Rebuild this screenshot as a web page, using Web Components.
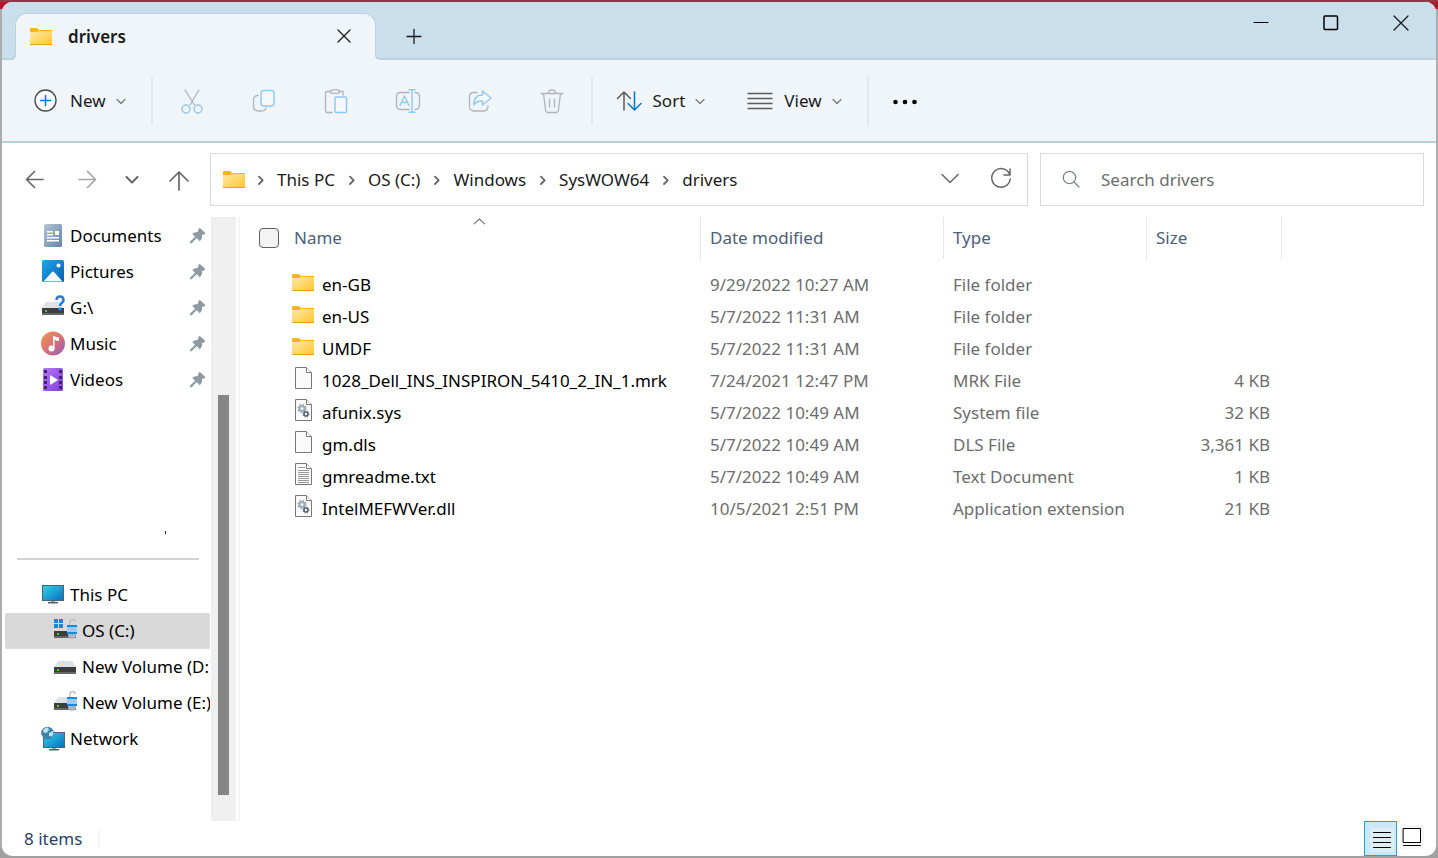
<!DOCTYPE html>
<html lang="en">
<head>
<meta charset="utf-8">
<meta name="viewport" content="width=device-width, initial-scale=1">
<title>drivers</title>
<style>
  html, body {
    margin: 0;
    height: 100%;
  }

  body {
    --line: #bad0dd;
    --bar: #eff5f9;
    --title: #c9dfeb;
    --text: #000;
    --muted: #6d6d6d;
    --heading: #4c607a;
    font: 17px/24px "Noto Sans", "Open Sans", sans-serif;
    color: var(--text);
    background: linear-gradient(#8b3b45 0 2px, #a81c2c 2px 9px, #acacac 9px 848px, #a0a0a0 848px);
    overflow: hidden;
  }
</style>
</head>
<body>
<explorer-window>
  <title-bar slot="title" label="drivers"></title-bar>
  <command-bar slot="commands"></command-bar>
  <address-bar slot="address" path="This PC/OS (C:)/Windows/SysWOW64/drivers"></address-bar>
  <nav-pane slot="nav">
    <nav-item icon="documents" pinned>Documents</nav-item>
    <nav-item icon="pictures" pinned>Pictures</nav-item>
    <nav-item icon="driveUnknown" pinned>G:\</nav-item>
    <nav-item icon="music" pinned>Music</nav-item>
    <nav-item icon="videos" pinned>Videos</nav-item>
    <nav-item slot="devices" icon="pc">This PC</nav-item>
    <nav-item slot="devices" icon="driveOs" nested selected>OS (C:)</nav-item>
    <nav-item slot="devices" icon="drive" nested>New Volume (D:)</nav-item>
    <nav-item slot="devices" icon="driveUnlocked" nested>New Volume (E:)</nav-item>
    <nav-item slot="devices" icon="network">Network</nav-item>
  </nav-pane>
  <file-list slot="files"></file-list>
  <status-bar slot="status">8 items</status-bar>
</explorer-window>

<script>
const driveBase = `
  <path d="M5 6h14l4 6H1z" fill="#dfe1e4"/>
  <path d="M1 12h22v7H1z" fill="#3d3d3d"/>
  <path d="M1 17h22v2H1z" fill="#666"/>
  <path d="M4 14h2v2H4z" fill="#2be02b"/>`;

const padlock = `
  <path d="M17 7V3q0-2.500 2.500-2.500T22 3" fill="none" stroke="#b9c3cb" stroke-width="1.500"/>
  <path d="M15 7h8v9q0 3-4 4-4-1-4-4z" fill="#a9b5bf"/>
  <path d="M14 6h10v2H14zM14 13h10v2H14z" fill="#1689dc"/>
  <path d="M14 8h10v5H14z" fill="#9ccbee"/>`;

const page = `
  <path d="M4.500.500h11l5 5v16h-16z" fill="#fafafa" stroke="#777"/>
  <path d="M15.500.500v5h5" fill="#fff" stroke="#777"/>`;

const gears = `
  <circle cx="11" cy="9.500" r="2.500" fill="none" stroke="#9aa7b5" stroke-width="2"/>
  <circle cx="11" cy="9.500" r="4" fill="none" stroke="#9aa7b5" stroke-width="1.500" stroke-dasharray="1.600 1.540"/>
  <circle cx="15" cy="15" r="2" fill="none" stroke="#56626e" stroke-width="1.600"/>
  <circle cx="15" cy="15" r="3" fill="none" stroke="#56626e" stroke-width="1" stroke-dasharray="1.200 1.150"/>`;

const monitor = `
  <path d="M10 17h4v3h-4z" fill="#99a3ab"/>
  <path d="M7 19h10v1.500H7z" fill="#55616a"/>
  <path d="M1 2h22v16H1z" fill="#456579"/>
  <path d="M2 3h20v14H2z" fill="url(#g)"/>`;

// Every icon is drawn on a 24 x 24 grid
const ICONS = {
  folder: `
    <linearGradient id="g" x2="1" y2="1"><stop stop-color="#ffe9a6"/><stop offset="1" stop-color="#ffc62f"/></linearGradient>
    <path d="M1 4q0-1 1-1h6l2 2h13v3H1z" fill="#f9b41a"/>
    <path d="M1 7h7l2-1h13v14H1z" fill="url(#g)"/>
    <path d="M1 19h22v1H1z" fill="#e9a417"/>`,
  close: `<path d="m6 5 12 12M18 5 6 17" class="s"/>`,
  closeWin: `<path d="m5 5 14 14M19 5 5 19" class="s"/>`,
  plus: `<path d="M12 4.500v14M5 11.500h14" class="s"/>`,
  minimize: `<path d="M5 11.500h14" class="s" stroke="#000" stroke-width="1"/>`,
  maximize: `<rect x="5" y="5" width="13.500" height="13.500" rx="1" class="s" stroke="#000" stroke-width="1.500"/>`,
  add: `<circle cx="11.500" cy="11.500" r="10.500" class="s" fill="#fafcfd" stroke="#484848" stroke-width="1.300"/><path d="M11.500 6.500v10M6.500 11.500h10" class="s" stroke="#0078d4" stroke-width="1.500"/>`,
  chevron: `<path d="m8 10.500 4 4 4-4" class="s" stroke="#777" stroke-width="1.200"/>`,
  cut: `<path d="m5 1 9.500 15M19 1l-5 8-4 7" class="s" stroke="#b2b5b8"/><circle cx="6" cy="20" r="4" class="s" stroke="#96c8ee" stroke-width="1.500"/><circle cx="18" cy="20" r="4" class="s" stroke="#96c8ee" stroke-width="1.500"/>`,
  copy: `<path d="M6 6.500Q1.500 6.500 1.500 11v6q0 5 5 5h3q4 0 4.500-3" class="s" stroke="#b2b5b8"/><rect x="9" y="1.500" width="13" height="15.500" rx="3" class="s" fill="#f3f9fd" stroke="#96c8ee" stroke-width="1.500"/>`,
  paste: `<path d="M7 2.500H3q-1.500 0-1.500 1.500v18q0 1.500 1.500 1.500h5M15 2.500h4V6" class="s" stroke="#b2b5b8"/><rect x="6.500" y=".800" width="9" height="3.500" rx="1.700" class="s" stroke="#b2b5b8"/><rect x="11" y="8" width="11.500" height="15.500" rx="1" class="s" fill="#f3f9fd" stroke="#96c8ee" stroke-width="1.500"/>`,
  rename: `<path d="M13 3.500H4Q.500 3.500.500 8v8q0 4.500 3.500 4.500h9M19 3.500q4.500 0 4.500 4.500v8q0 4.500-4.500 4.500" class="s" stroke="#b2b5b8"/><path d="M4 16.500 8.500 7l4.500 9.500M5.500 13.500h6M16 .700q-1 0-3 0h6M16 .700v22.600M13 23.300h6" class="s" stroke="#96c8ee" stroke-width="1.500"/>`,
  share: `<path d="M9 3.500H5.500Q1.500 3.500 1.500 8v9.500Q1.500 22 6 22h9.500q4.500 0 4.500-5" class="s" stroke="#b2b5b8"/><path d="M14.500 2 23 9l-8.500 7v-4q-6-.500-8.500 4Q5.500 6 14.500 6z" class="s" fill="#f3f9fd" stroke="#96c8ee" stroke-width="1.500"/>`,
  trash: `<path d="M1 4.500h22M8.500 4Q8.500 1 12 1t3.500 3M3.500 4.500l2 16.500q.300 2.500 2.500 2.500h8q2.200 0 2.500-2.500l2-16.500M9.500 10v8M14.500 10v8" class="s" stroke="#b2b5b8"/>`,
  sort: `<path d="M7 21V3M.500 9.500 7 3l6.500 6.500" class="s" stroke="#5a5a5a" stroke-width="1.500"/><path d="M17.500 3v18M11 14.500l6.500 6.500 6.500-6.500" class="s" stroke="#0078d4" stroke-width="1.500"/>`,
  view: `<path d="M0 4.500h24M0 9.500h24M0 14.500h24M0 19.500h24" class="s" stroke="#5a5a5a" stroke-width="1.300"/>`,
  more: `<circle cx="2.500" cy="13" r="2.300"/><circle cx="12" cy="13" r="2.300"/><circle cx="21.500" cy="13" r="2.300"/>`,
  back: `<path d="M20 11.500H3.500M11.500 3.500l-8 8 8 8" class="s" stroke="#666" stroke-width="1.700"/>`,
  forward: `<path d="M3 11.500h16.500M11.500 3.500l8 8-8 8" class="s" stroke="#a6a6a6" stroke-width="1.700"/>`,
  down: `<path d="m6.500 9 5.500 5.500L17.500 9" class="s" stroke="#666" stroke-width="2"/>`,
  up: `<path d="M12 22V4M3 13l9-9 9 9" class="s" stroke="#666" stroke-width="1.700"/>`,
  crumb: `<path d="m9 7 5.500 5.500L9 18" class="s" stroke="#666" stroke-width="2.800"/>`,
  expand: `<path d="m4 6.500 8 8 8-8" class="s" stroke="#666" stroke-width="1.500"/>`,
  refresh: `<path d="M20.500 6A9.300 9.300 0 1 0 21.300 11M21 1v6h-6" class="s" stroke="#666" stroke-width="1.500"/>`,
  search: `<circle cx="10.500" cy="9.500" r="6.200" class="s" stroke="#7a8088"/><path d="m15 14 5 5" class="s" stroke="#7a8088"/>`,
  sortAsc: `<path d="M5.500 14.500 12.500 8l7 6.500" class="s" stroke="#777" stroke-width="1.500"/>`,
  pin: `<path d="M13.500 0q2 0 8.500 6.500 2 2-1.500 3.500l-2.500.500q1 6-3.500 9.500L10 15l-7.500 8H0v-2.500L7.500 13 3.500 8.500Q6 6 11.500 6z" fill="#8f9ba4"/>`,
  documents: `
    <linearGradient id="g" x2="1" y2="1"><stop stop-color="#b4c6da"/><stop offset="1" stop-color="#6383a6"/></linearGradient>
    <rect x="3" width="18" height="23" rx="1.500" fill="url(#g)"/>
    <path d="M6 7h6v1.500H6zM6 10h6v1.500H6zM6 13h12v1.500H6zM6 16h12v1.500H6zM14 7h4v4h-4z" fill="#fff"/>`,
  pictures: `
    <linearGradient id="g" x2="1" y2="1"><stop stop-color="#1fa7ec"/><stop offset="1" stop-color="#0560b4"/></linearGradient>
    <rect x="1" width="22" height="22" rx="1.500" fill="url(#g)"/>
    <circle cx="17.500" cy="5.500" r="2" fill="#fff"/>
    <path d="m2.500 21.500 8.500-9.500q1-1 2 0l8.500 9.500z" fill="#f4f8fc"/>`,
  driveUnknown: driveBase + `<path d="M15.500 4Q15.500.500 19 .500t3.500 3.500c0 3-3.500 3-3.500 6" fill="none" stroke="#0f83da" stroke-width="2.500"/><circle cx="19" cy="13" r="1.700" fill="#1a91e8"/>`,
  music: `
    <linearGradient id="g" x2="1" y2="1"><stop offset=".100" stop-color="#f48e54"/><stop offset=".600" stop-color="#cf6b80"/><stop offset="1" stop-color="#8c60c8"/></linearGradient>
    <circle cx="12" cy="11.500" r="12" fill="url(#g)"/>
    <path d="M12 4h1q2.500 1.500 5 1.500V9q-2.500 0-4.500-1.500v9H12z" fill="#fff"/>
    <circle cx="10.500" cy="16.500" r="3" fill="#fff"/>`,
  videos: `
    <linearGradient id="g" x2="1" y2="1"><stop stop-color="#b377f4"/><stop offset="1" stop-color="#8240de"/></linearGradient>
    <rect x="2" width="20" height="23" rx="1.500" fill="url(#g)"/>
    <path d="M3 2h3v3H3zM3 8h3v3H3zM3 13h3v3H3zM3 18h3v3H3zM18 2h3v3h-3zM18 8h3v3h-3zM18 13h3v3h-3zM18 18h3v3h-3z" fill="#40236f"/>
    <path d="m9 7 8 5-8 5z" fill="#fff"/>`,
  pc: `<linearGradient id="g" x2="1" y2="1"><stop stop-color="#32d1e4"/><stop offset="1" stop-color="#0871c4"/></linearGradient>` + monitor,
  driveOs: driveBase.replace('M5 6h14l4 6H1z', 'M12 9h9l2 3H11z') + `<path d="M1 0h4v4H1zM6 0h4v4H6zM1 5h4v4H1zM6 5h4v4H6z" fill="#1688dc"/>` + padlock,
  drive: driveBase,
  driveUnlocked: driveBase + padlock,
  network: `
    <linearGradient id="g" x2="1" y2="1"><stop stop-color="#32d1e4"/><stop offset="1" stop-color="#0871c4"/></linearGradient>
    <g transform="translate(1 3)">${monitor}</g>
    <circle cx="6.500" cy="6" r="6.300" fill="#3d84ab"/>
    <path d="M2 3q2-3 5-2.500L8 3 6 5.500 3 6zM8 6l4-2q1 3-1 5.500L8 9z" fill="#bfe0ec"/>`,
  file: page,
  system: page + gears,
  text: page + `<path d="M7 4.500h7M7 7.500h11M7 9.500h11M7 11.500h11M7 13.500h11M7 15.500h11M7 17.500h11M7 19.500h11" stroke="#9a9a9a"/>`,
  details: `<path d="M3.500 4.500h17M3.500 9.500h17M3.500 14.500h17M3.500 19.500h17" class="s" stroke="#000" stroke-width="1"/>`,
  thumbs: `<path d="M3.500 3.500h17v14h-17zM3.500 20.500h17" class="s" fill="#fff" stroke="#000" stroke-width="1"/>`
};

class FxIcon extends HTMLElement {
  constructor() {
    super();
    this.attachShadow({ mode: 'open' });
  }

  connectedCallback() {
    this.shadowRoot.innerHTML = `
      <style>
        :host { display: inline-block; width: 24px; height: 24px; flex: none; }
        svg { display: block; width: 100%; height: 100%; overflow: visible; }
        .s { stroke-linecap: round; stroke-linejoin: round; }
        .s:not([fill]) { fill: none; }
        .s:not([stroke]) { stroke: #1a1a1a; }
        .s:not([stroke-width]) { stroke-width: 1.3px; }
      </style>
      <svg viewBox="0 0 24 24" aria-hidden="true">${ICONS[this.getAttribute('name')] || ''}</svg>
    `;
  }
}

class ExplorerWindow extends HTMLElement {
  constructor() {
    super();
    this.attachShadow({ mode: 'open' });
    this.shadowRoot.innerHTML = `
      <style>
        :host {
          display: block;
          box-sizing: border-box;
          height: 100vh;
          padding: 2px;
        }
        .frame {
          box-sizing: border-box;
          height: 100%;
          display: flex;
          flex-direction: column;
          background: #fff;
          border-radius: 10px;
          overflow: hidden;
        }
        .main {
          flex: 1;
          min-height: 0;
          display: grid;
          grid-template-columns: 236px minmax(0, 1fr);
        }
      </style>
      <div class="frame">
        <slot name="title"></slot>
        <slot name="commands"></slot>
        <slot name="address"></slot>
        <div class="main">
          <slot name="nav"></slot>
          <slot name="files"></slot>
        </div>
        <slot name="status"></slot>
      </div>
    `;
  }
}

class TitleBar extends HTMLElement {
  constructor() {
    super();
    this.attachShadow({ mode: 'open' });
  }

  connectedCallback() {
    this.shadowRoot.innerHTML = `
      <style>
        :host {
          display: flex;
          align-items: flex-end;
          height: 58px;
          padding-left: 13px;
          background: linear-gradient(var(--title) 56px, #bdd2e0 56px);
        }
        button {
          font: inherit;
          padding: 0;
          border: 0;
          background: none;
          display: grid;
          place-items: center;
        }
        .tab {
          box-sizing: border-box;
          position: relative;
          display: flex;
          align-items: center;
          width: 361px;
          height: 47px;
          padding: 0 18px 0 13px;
          background: var(--bar);
          border: 1px solid #bdd2e0;
          border-bottom: 0;
          border-radius: 12px 12px 0 0;
        }
        /* feet that flare out where the tab meets the bar */
        .tab::before, .tab::after {
          content: "";
          position: absolute;
          bottom: 0;
          width: 5px;
          height: 5px;
        }
        .tab::before {
          right: 100%;
          background: radial-gradient(circle at 0 0, var(--title) 3px, #bdd2e0 3px 5px, var(--bar) 5px);
        }
        .tab::after {
          left: 100%;
          background: radial-gradient(circle at 100% 0, var(--title) 3px, #bdd2e0 3px 5px, var(--bar) 5px);
        }
        .tab span {
          flex: 1;
          margin-left: 15px;
          font-weight: 600;
          color: #1a1a1a;
        }
        .tab button { width: 26px; height: 26px; }
        .new { width: 48px; height: 46px; margin-left: 14px; }
        .controls {
          display: flex;
          margin-left: auto;
          align-self: flex-start;
        }
        .controls button { width: 70px; height: 41px; }
      </style>
      <div class="tab">
        <fx-icon name="folder"></fx-icon>
        <span>${this.getAttribute('label')}</span>
        <button aria-label="Close tab"><fx-icon name="close"></fx-icon></button>
      </div>
      <button class="new" aria-label="New tab"><fx-icon name="plus"></fx-icon></button>
      <div class="controls">
        <button aria-label="Minimize"><fx-icon name="minimize"></fx-icon></button>
        <button aria-label="Maximize"><fx-icon name="maximize"></fx-icon></button>
        <button aria-label="Close"><fx-icon name="closeWin"></fx-icon></button>
      </div>
    `;
  }
}

class CommandBar extends HTMLElement {
  constructor() {
    super();
    this.attachShadow({ mode: 'open' });
    const actions = ['cut', 'copy', 'paste', 'rename', 'share', 'trash'];
    this.shadowRoot.innerHTML = `
      <style>
        :host {
          display: flex;
          align-items: center;
          height: 81px;
          padding-left: 32px;
          background: var(--bar);
          border-bottom: 2px solid var(--line);
        }
        button {
          display: flex;
          align-items: center;
          gap: 12px;
          height: 48px;
          padding: 0;
          border: 0;
          background: none;
          font: inherit;
          color: #1a1a1a;
        }
        .menu fx-icon:last-child { margin: 0 -6px 0 -9px; }
        .sep {
          width: 2px;
          height: 48px;
          margin: 0 24px;
          background: #e1e7ec;
        }
        .actions {
          display: flex;
          margin: 0 -21px;
        }
        .actions button { width: 72px; justify-content: center; }
        .menu + .menu { margin-left: 42px; }
      </style>
      <button class="menu"><fx-icon name="add"></fx-icon>New<fx-icon name="chevron"></fx-icon></button>
      <div class="sep"></div>
      <div class="actions">
        ${actions.map(name => `<button disabled aria-label="${name}"><fx-icon name="${name}"></fx-icon></button>`).join('')}
      </div>
      <div class="sep"></div>
      <button class="menu"><fx-icon name="sort"></fx-icon>Sort<fx-icon name="chevron"></fx-icon></button>
      <button class="menu"><fx-icon name="view"></fx-icon>View<fx-icon name="chevron"></fx-icon></button>
      <div class="sep"></div>
      <button aria-label="See more"><fx-icon name="more"></fx-icon></button>
    `;
  }
}

class AddressBar extends HTMLElement {
  constructor() {
    super();
    this.attachShadow({ mode: 'open' });
  }

  connectedCallback() {
    const crumbs = this.getAttribute('path').split('/');
    this.shadowRoot.innerHTML = `
      <style>
        :host {
          display: grid;
          grid-template-columns: 196px minmax(0, 1fr) 384px;
          gap: 12px;
          padding: 10px 12px 11px 0;
        }
        button {
          padding: 0;
          border: 0;
          background: none;
          display: grid;
          place-items: center;
        }
        .history {
          display: grid;
          grid-template-columns: 52px 54px 34px 60px;
          padding-left: 7px;
        }
        .box {
          box-sizing: border-box;
          display: flex;
          align-items: center;
          height: 53px;
          border: 1px solid #d9d9d9;
          background: #fff;
        }
        .path { padding: 0 14px 0 11px; }
        .path nav { display: flex; align-items: center; flex: 1; margin-left: -1px; }
        .path a { color: #1a1a1a; text-decoration: none; white-space: nowrap; }
        .path nav fx-icon { width: 16px; height: 16px; margin: 0 8px 0 9px; }
        .path nav fx-icon:first-child { margin-left: 8px; }
        .path button { width: 24px; height: 24px; }
        .path button + button { margin-left: 27px; }
        .search { padding: 0 18px; gap: 18px; }
        .search input {
          flex: 1;
          min-width: 0;
          padding: 0;
          border: 0;
          outline: 0;
          font: inherit;
          background: none;
        }
        .search input::placeholder { color: var(--muted); opacity: 1; }
      </style>
      <div class="history">
        <button aria-label="Back"><fx-icon name="back"></fx-icon></button>
        <button aria-label="Forward"><fx-icon name="forward"></fx-icon></button>
        <button aria-label="Recent locations"><fx-icon name="down"></fx-icon></button>
        <button aria-label="Up"><fx-icon name="up"></fx-icon></button>
      </div>
      <div class="box path">
        <fx-icon name="folder"></fx-icon>
        <nav aria-label="Path">
          ${crumbs.map(crumb => `<fx-icon name="crumb"></fx-icon><a href="#">${crumb}</a>`).join('')}
        </nav>
        <button aria-label="Previous locations"><fx-icon name="expand"></fx-icon></button>
        <button aria-label="Refresh"><fx-icon name="refresh"></fx-icon></button>
      </div>
      <label class="box search">
        <fx-icon name="search"></fx-icon>
        <input type="text" placeholder="Search drivers" aria-label="Search drivers">
      </label>
    `;
  }
}

class NavItem extends HTMLElement {
  constructor() {
    super();
    this.attachShadow({ mode: 'open' });
  }

  connectedCallback() {
    this.shadowRoot.innerHTML = `
      <style>
        :host { display: block; }
        a {
          display: flex;
          align-items: center;
          gap: 5px;
          height: 36px;
          padding: 0 4px 0 36px;
          border-radius: 2px;
          color: inherit;
          text-decoration: none;
          white-space: nowrap;
        }
        :host([nested]) a { padding: 0 0 0 48px; }
        :host([selected]) a { background: #d9d9d9; }
        span { flex: 1; min-width: 0; overflow: hidden; }
        .pin { width: 16px; height: 16px; }
      </style>
      <a href="#">
        <fx-icon name="${this.getAttribute('icon')}"></fx-icon>
        <span><slot></slot></span>
        ${this.hasAttribute('pinned') ? '<fx-icon class="pin" name="pin"></fx-icon>' : ''}
      </a>
    `;
  }
}

class NavPane extends HTMLElement {
  constructor() {
    super();
    this.attachShadow({ mode: 'open' });
    this.shadowRoot.innerHTML = `
      <style>
        :host {
          display: grid;
          grid-template-columns: minmax(0, 1fr) 25px;
          min-height: 0;
          margin-right: 2px;
        }
        .items { padding: 1px 1px 0 3px; overflow: hidden; }
        .blank {
          box-sizing: border-box;
          height: 160px;
          padding: 133px 44px 0 0;
        }
        .mark { width: 1px; height: 3px; margin-left: auto; background: #222; }
        hr {
          height: 2px;
          margin: 0 11px 17px 12px;
          border: 0;
          background: #d5d5d5;
        }
        .track {
          box-sizing: border-box;
          display: grid;
          grid-template-rows: 178fr 400fr 26fr;
          padding: 0 7px;
          background: #efefef;
        }
        .thumb { grid-row: 2; background: #858585; }
      </style>
      <div class="items">
        <slot></slot>
        <div class="blank"><div class="mark"></div></div>
        <hr>
        <slot name="devices"></slot>
      </div>
      <div class="track"><div class="thumb"></div></div>
    `;
  }
}

const FILES = [
  ['folder', 'en-GB', '9/29/2022 10:27 AM', 'File folder', ''],
  ['folder', 'en-US', '5/7/2022 11:31 AM', 'File folder', ''],
  ['folder', 'UMDF', '5/7/2022 11:31 AM', 'File folder', ''],
  ['file', '1028_Dell_INS_INSPIRON_5410_2_IN_1.mrk', '7/24/2021 12:47 PM', 'MRK File', '4 KB'],
  ['system', 'afunix.sys', '5/7/2022 10:49 AM', 'System file', '32 KB'],
  ['file', 'gm.dls', '5/7/2022 10:49 AM', 'DLS File', '3,361 KB'],
  ['text', 'gmreadme.txt', '5/7/2022 10:49 AM', 'Text Document', '1 KB'],
  ['system', 'IntelMEFWVer.dll', '10/5/2021 2:51 PM', 'Application extension', '21 KB']
];

class FileList extends HTMLElement {
  constructor() {
    super();
    this.attachShadow({ mode: 'open' });
    this.shadowRoot.innerHTML = `
      <style>
        :host {
          display: block;
          min-width: 0;
          border-left: 2px solid #f5f5f5;
        }
        table {
          width: 1042px;
          table-layout: fixed;
          border-collapse: separate;
          border-spacing: 0;
        }
        .name { width: 461px; }
        .date { width: 243px; }
        .type { width: 203px; }
        .size { width: 135px; }
        th, td {
          box-sizing: border-box;
          padding: 0 0 0 9px;
          text-align: left;
          font-weight: 400;
          white-space: nowrap;
        }
        th {
          position: relative;
          height: 42px;
          border-right: 1px solid #e5e5e5;
          color: var(--heading);
        }
        th:first-child { padding-left: 19px; }
        .head { display: flex; align-items: center; gap: 15px; }
        input {
          appearance: none;
          box-sizing: border-box;
          width: 20px;
          height: 20px;
          margin: 0;
          border: 1px solid #606060;
          border-radius: 4px;
          background: #f3f3f3;
        }
        .asc {
          position: absolute;
          top: -4px;
          left: 50%;
          width: 18px;
          height: 18px;
        }
        tbody::before { content: ""; display: block; height: 10px; }
        td { height: 32px; color: var(--muted); }
        td:first-child { padding-left: 51px; color: var(--text); }
        td:last-child { padding: 0 12px 0 0; text-align: right; }
        .file { display: flex; align-items: center; gap: 7px; height: 28px; }
        .file fx-icon { align-self: flex-start; }
      </style>
      <table>
        <colgroup><col class="name"><col class="date"><col class="type"><col class="size"></colgroup>
        <thead>
          <tr>
            <th>
              <div class="head"><input type="checkbox" id="all" aria-label="Select all"><label for="all">Name</label></div>
              <fx-icon class="asc" name="sortAsc"></fx-icon>
            </th>
            <th>Date modified</th>
            <th>Type</th>
            <th>Size</th>
          </tr>
        </thead>
        <tbody>
          ${FILES.map(([icon, name, date, type, size]) => `
            <tr>
              <td><div class="file"><fx-icon name="${icon}"></fx-icon><span>${name}</span></div></td>
              <td>${date}</td>
              <td>${type}</td>
              <td>${size}</td>
            </tr>`).join('')}
        </tbody>
      </table>
    `;
  }
}

class StatusBar extends HTMLElement {
  constructor() {
    super();
    this.attachShadow({ mode: 'open' });
    this.shadowRoot.innerHTML = `
      <style>
        :host {
          display: flex;
          align-items: center;
          height: 35px;
          padding: 0 12px 0 22px;
          color: #2b4266;
        }
        .sep {
          width: 2px;
          height: 18px;
          margin-left: 16px;
          background: #f3f3f3;
        }
        .views {
          display: flex;
          align-items: center;
          gap: 3px;
          height: 100%;
          margin-left: auto;
        }
        button {
          display: grid;
          place-items: center;
          padding: 0;
          border: 0;
          border-radius: 3px;
          background: #f5f5f5;
        }
        .views button:last-child { margin-bottom: 3px; }
        .on {
          box-sizing: border-box;
          width: 33px;
          height: 35px;
          padding: 3px 0 0 2px;
          border: 1px solid #26a0da;
          border-radius: 0;
          background: #cce8f6;
        }
        .on fx-icon { background: #dfedf4; border-radius: 3px; }
      </style>
      <slot></slot>
      <div class="sep"></div>
      <div class="views">
        <button class="on" aria-label="Details view"><fx-icon name="details"></fx-icon></button>
        <button aria-label="Large thumbnails"><fx-icon name="thumbs"></fx-icon></button>
      </div>
    `;
  }
}

customElements.define('fx-icon', FxIcon);
customElements.define('explorer-window', ExplorerWindow);
customElements.define('title-bar', TitleBar);
customElements.define('command-bar', CommandBar);
customElements.define('address-bar', AddressBar);
customElements.define('nav-item', NavItem);
customElements.define('nav-pane', NavPane);
customElements.define('file-list', FileList);
customElements.define('status-bar', StatusBar);
</script>
</body>
</html>
